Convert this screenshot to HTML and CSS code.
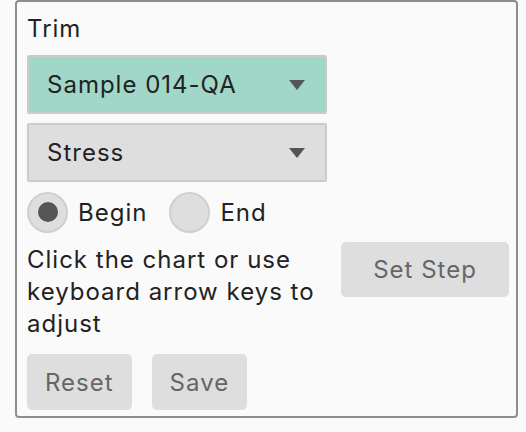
FILE: index.html
```html
<!DOCTYPE html>
<html>
<head>
<meta charset="utf-8">
<link rel="stylesheet" href="styles.css">
</head>
<body>
<div class="panel">
  <div class="title">Trim</div>
  <div class="select select-active">
    <span>Sample 014-QA</span>
    <svg class="caret" width="16" height="10" viewBox="0 0 16 10"><path d="M0 0H16L8 10Z" fill="#555"/></svg>
  </div>
  <div class="select">
    <span>Stress</span>
    <svg class="caret" width="16" height="10" viewBox="0 0 16 10"><path d="M0 0H16L8 10Z" fill="#555"/></svg>
  </div>
  <div class="radios">
    <label class="radio"><span class="dot checked"></span><span>Begin</span></label>
    <label class="radio"><span class="dot"></span><span>End</span></label>
  </div>
  <div class="step-row">
    <p class="hint">Click the chart or use keyboard arrow keys to adjust</p>
    <button class="btn btn-step">Set Step</button>
  </div>
  <div class="actions">
    <button class="btn">Reset</button>
    <button class="btn">Save</button>
  </div>
</div>
</body>
</html>
```

FILE: styles.css
```css
html, body {
  margin: 0;
  padding: 0;
  background: #fafafa;
}
body {
  font-family: Inter, "Liberation Sans", sans-serif;
  font-size: 24px;
  letter-spacing: 1px;
  color: #222;
}
.panel {
  box-sizing: border-box;
  margin-left: 15px;
  width: 503px;
  height: 418px;
  border: 2px solid #8d8d8d;
  border-radius: 4px;
  padding: 11px 7px 0 10px;
  display: flex;
  flex-direction: column;
}
.title {
  line-height: 32px;
  height: 32px;
}
.select {
  box-sizing: border-box;
  margin-top: 10px;
  width: 300px;
  height: 59px;
  border: 2px solid #cbcbcb;
  border-radius: 2px;
  background: #dedede;
  display: flex;
  align-items: center;
  justify-content: space-between;
  padding: 0 20px 0 18px;
}
.select + .select {
  margin-top: 9px;
}
.select-active {
  background: #a1d7c8;
}
.caret {
  display: block;
}
.radios {
  display: flex;
  gap: 22px;
  margin-top: 9px;
  height: 42px;
  align-items: center;
}
.radio {
  display: flex;
  align-items: center;
  gap: 10px;
}
.dot {
  box-sizing: border-box;
  width: 41px;
  height: 41px;
  border-radius: 50%;
  background: #dedede;
  border: 2px solid #cfcfcf;
  display: flex;
  align-items: center;
  justify-content: center;
}
.dot.checked::after {
  content: "";
  width: 20px;
  height: 20px;
  border-radius: 50%;
  background: #555;
}
.step-row {
  display: flex;
  justify-content: space-between;
  align-items: flex-start;
  margin-top: 9px;
}
.hint {
  margin: 2px 0 0 0;
  width: 300px;
  line-height: 32px;
}
.btn {
  font-family: inherit;
  font-size: 24px;
  letter-spacing: 1px;
  color: #666;
  background: #dedede;
  border: none;
  border-radius: 5px;
  height: 56px;
  padding: 0 18px;
}
.btn-step {
  width: 168px;
  height: 55px;
  padding: 0;
}
.actions {
  display: flex;
  gap: 20px;
  margin-top: 14px;
}
```
